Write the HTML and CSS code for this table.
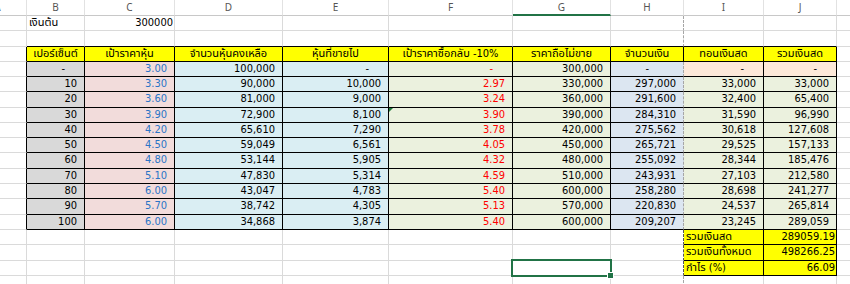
FILE: index.html
```html
<!DOCTYPE html>
<html lang="th">
<head>
<meta charset="utf-8">
<title>Sheet</title>
<link rel="stylesheet" href="styles.css">
</head>
<body>
<div class="sheet">
  <div class="c h">A</div><div class="c h">B</div><div class="c h">C</div><div class="c h">D</div><div class="c h">E</div><div class="c h">F</div><div class="c h hg">G</div><div class="c h">H</div><div class="c h">I</div><div class="c h">J</div><div class="c h"></div>

  <div class="c"></div><div class="c lbl">เงินต้น</div><div class="c r1">300000</div><div class="c"></div><div class="c"></div><div class="c"></div><div class="c"></div><div class="c pb"></div><div class="c"></div><div class="c"></div><div class="c"></div>

  <div class="c"></div><div class="c tt"></div><div class="c tt"></div><div class="c tt"></div><div class="c tt"></div><div class="c tt"></div><div class="c tt"></div><div class="c tt pb"></div><div class="c tt"></div><div class="c tt"></div><div class="c"></div>

  <div class="c tl"></div>
  <div class="c t y ctr">เปอร์เซ็นต์</div>
  <div class="c t y ctr">เป้าราคาหุ้น</div>
  <div class="c t y ctr">จำนวนหุ้นคงเหลือ</div>
  <div class="c t y ctr">หุ้นที่ขายไป</div>
  <div class="c t y ctr">เป้าราคาซื้อกลับ -10%</div>
  <div class="c t y ctr">ราคาถือไม่ขาย</div>
  <div class="c t y ctr">จำนวนเงิน</div>
  <div class="c t y ctr">ทอนเงินสด</div>
  <div class="c t y ctr">รวมเงินสด</div>
  <div class="c"></div>

  <div class="c tl"></div><div class="c t gr d">-</div><div class="c t pk n blue">3.00</div><div class="c t lb n">100,000</div><div class="c t lb d">-</div><div class="c t gn d red">-</div><div class="c t gn n">300,000</div><div class="c t hb pbd dh">-</div><div class="c t pe d">-</div><div class="c t pe d">-</div><div class="c"></div>

  <div class="c tl"></div><div class="c t gr n">10</div><div class="c t pk n blue">3.30</div><div class="c t lb n">90,000</div><div class="c t lb n">10,000</div><div class="c t gn n red">2.97</div><div class="c t gn n">330,000</div><div class="c t hb pbd n">297,000</div><div class="c t gn n">33,000</div><div class="c t gn n">33,000</div><div class="c"></div>

  <div class="c tl"></div><div class="c t gr n">20</div><div class="c t pk n blue">3.60</div><div class="c t lb n">81,000</div><div class="c t lb n">9,000</div><div class="c t gn n red">3.24</div><div class="c t gn n">360,000</div><div class="c t hb pbd n">291,600</div><div class="c t gn n">32,400</div><div class="c t gn n">65,400</div><div class="c"></div>

  <div class="c tl"></div><div class="c t gr n">30</div><div class="c t pk n blue">3.90</div><div class="c t lb n">72,900</div><div class="c t lb n">8,100</div><div class="c t gn n red flag">3.90</div><div class="c t gn n">390,000</div><div class="c t hb pbd n">284,310</div><div class="c t gn n">31,590</div><div class="c t gn n">96,990</div><div class="c"></div>

  <div class="c tl"></div><div class="c t gr n">40</div><div class="c t pk n blue">4.20</div><div class="c t lb n">65,610</div><div class="c t lb n">7,290</div><div class="c t gn n red">3.78</div><div class="c t gn n">420,000</div><div class="c t hb pbd n">275,562</div><div class="c t gn n">30,618</div><div class="c t gn n">127,608</div><div class="c"></div>

  <div class="c tl"></div><div class="c t gr n">50</div><div class="c t pk n blue">4.50</div><div class="c t lb n">59,049</div><div class="c t lb n">6,561</div><div class="c t gn n red">4.05</div><div class="c t gn n">450,000</div><div class="c t hb pbd n">265,721</div><div class="c t gn n">29,525</div><div class="c t gn n">157,133</div><div class="c"></div>

  <div class="c tl"></div><div class="c t gr n">60</div><div class="c t pk n blue">4.80</div><div class="c t lb n">53,144</div><div class="c t lb n">5,905</div><div class="c t gn n red">4.32</div><div class="c t gn n">480,000</div><div class="c t hb pbd n">255,092</div><div class="c t gn n">28,344</div><div class="c t gn n">185,476</div><div class="c"></div>

  <div class="c tl"></div><div class="c t gr n">70</div><div class="c t pk n blue">5.10</div><div class="c t lb n">47,830</div><div class="c t lb n">5,314</div><div class="c t gn n red">4.59</div><div class="c t gn n">510,000</div><div class="c t hb pbd n">243,931</div><div class="c t gn n">27,103</div><div class="c t gn n">212,580</div><div class="c"></div>

  <div class="c tl"></div><div class="c t gr n">80</div><div class="c t pk n blue">6.00</div><div class="c t lb n">43,047</div><div class="c t lb n">4,783</div><div class="c t gn n red">5.40</div><div class="c t gn n">600,000</div><div class="c t hb pbd n">258,280</div><div class="c t gn n">28,698</div><div class="c t gn n">241,277</div><div class="c"></div>

  <div class="c tl"></div><div class="c t gr n">90</div><div class="c t pk n blue">5.70</div><div class="c t lb n">38,742</div><div class="c t lb n">4,305</div><div class="c t gn n red">5.13</div><div class="c t gn n">570,000</div><div class="c t hb pbd n">220,830</div><div class="c t gn n">24,537</div><div class="c t gn n">265,814</div><div class="c"></div>

  <div class="c tl"></div><div class="c t gr n">100</div><div class="c t pk n blue">6.00</div><div class="c t lb n">34,868</div><div class="c t lb n">3,874</div><div class="c t gn n red">5.40</div><div class="c t gn n">600,000</div><div class="c t hb pbd n">209,207</div><div class="c t gn n">23,245</div><div class="c t gn n">289,059</div><div class="c"></div>

  <div class="c"></div><div class="c"></div><div class="c"></div><div class="c"></div><div class="c"></div><div class="c"></div><div class="c"></div><div class="c pbk"></div><div class="c t y lbl">รวมเงินสด</div><div class="c t y r1">289059.19</div><div class="c"></div>

  <div class="c"></div><div class="c"></div><div class="c"></div><div class="c"></div><div class="c"></div><div class="c"></div><div class="c"></div><div class="c pbk"></div><div class="c t y lbl">รวมเงินทั้งหมด</div><div class="c t y r1">498266.25</div><div class="c"></div>

  <div class="c"></div><div class="c"></div><div class="c"></div><div class="c"></div><div class="c"></div><div class="c"></div><div class="c sel-cell"><span class="sel"><span class="handle"></span></span></div><div class="c pbk"></div><div class="c t y lbl">กำไร (%)</div><div class="c t y r1">66.09</div><div class="c"></div>

  <div class="c"></div><div class="c"></div><div class="c"></div><div class="c"></div><div class="c"></div><div class="c"></div><div class="c"></div><div class="c pb"></div><div class="c"></div><div class="c"></div><div class="c"></div>
</div>
</body>
</html>
```

FILE: styles.css
```css
html, body {
  margin: 0;
  padding: 0;
  background: #fff;
  overflow: hidden;
}
body {
  width: 850px;
  height: 284px;
}
.sheet {
  position: relative;
  margin-left: -31px;
  display: grid;
  grid-template-columns: 58px 58px 90px 108px 106px 124px 98px 73px 80px 73px 100px;
  grid-template-rows: 16px 15px 16px 15px 15px 15px 16px 15px 15px 15px 16px 15px 15px 16px 15px 15px 16px 15px 15px;
  font-family: Tahoma, "DejaVu Sans Condensed", "Noto Sans Thai", "Loma", sans-serif;
  font-size: 11px;
  color: #000;
}
.c {
  box-sizing: border-box;
  border-right: 1px solid #dadada;
  border-bottom: 1px solid #dadada;
  white-space: nowrap;
  overflow: hidden;
  line-height: 14px;
  padding: 0 2px;
  text-align: left;
}
.h {
  text-align: center;
  color: #555;
  font-family: "Noto Sans", "DejaVu Sans", sans-serif;
  font-size: 10px;
  line-height: 14px;
  border-bottom: 1px solid #c8c8c8;
  border-right: 1px solid #e2e2e2;
}
.hg { border-bottom: 2px solid #217346; }
.lbl { text-align: left; padding-left: 2px; }
.r1 { text-align: right; padding-right: 1px; }
.ctr { text-align: center; padding: 0; }
.n { text-align: right; padding-right: 7px; }
.d { text-align: right; padding-right: 19px; }
.dh { text-align: right; padding-right: 34px; }

.t { border-right: 1px solid #000; border-bottom: 1px solid #000; }
.tt { border-bottom: 1px solid #000; }
.tl { border-right: 1px solid #000; }
.pb { border-right: 1px dashed #a6a6a6; }
.pbd { border-right: 1px dashed #a6a6a6; }
.pbk { border-right: 1px dashed #555; }

.y { background: #ffff00; }
.gr { background: #d9d9d9; }
.pk { background: #f2dcdb; }
.lb { background: #daeef3; }
.gn { background: #ebf1de; }
.hb { background: #dce6f1; }
.pe { background: #fde9d9; }
.blue { color: #2a74c6; }
.red { color: #ff0000; }

.flag { position: relative; }
.flag::before {
  content: "";
  position: absolute;
  left: 0;
  top: 0;
  border-top: 4px solid #1f7a3a;
  border-right: 4px solid transparent;
}
.sel-cell { position: relative; overflow: visible; }
.sel {
  position: absolute;
  left: -2px;
  top: -2px;
  width: 101px;
  height: 18px;
  box-sizing: border-box;
  border: 2px solid #217346;
  z-index: 2;
}
.handle {
  position: absolute;
  right: -4px;
  bottom: -4px;
  width: 5px;
  height: 5px;
  background: #217346;
  border: 1px solid #fff;
}
```
